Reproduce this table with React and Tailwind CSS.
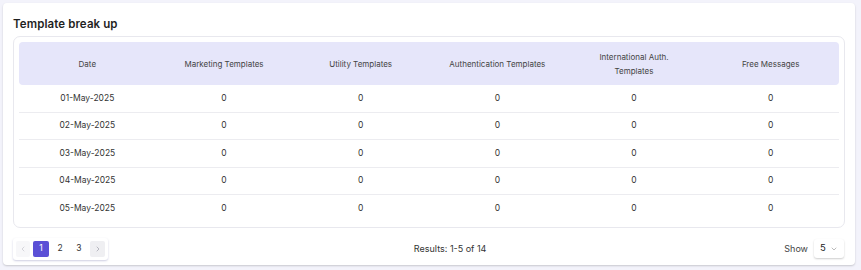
import React from "react";
import { FiChevronLeft, FiChevronRight, FiChevronDown } from "react-icons/fi";

const columns = [
  "Date",
  "Marketing Templates",
  "Utility Templates",
  "Authentication Templates",
  "International Auth.|Templates",
  "Free Messages",
];

const rows = ["01-May-2025", "02-May-2025", "03-May-2025", "04-May-2025", "05-May-2025"];

export default function App() {
  return (
    <div
      className="w-[861px] h-[270px] bg-[#f3f3fb] pt-[3px] pl-[3px] overflow-hidden"
      style={{ fontFamily: "Inter, 'Noto Sans', sans-serif" }}
    >
      <div className="w-[852px] h-[262px] bg-white rounded-[4px] shadow-[0_1px_2px_rgba(0,0,0,0.18)] px-[10px] pt-[14px]">
        <h2 className="text-[11.5px] font-semibold text-[#1f1f1f] leading-[15px] tracking-[0.1px]">
          Template break up
        </h2>

        {/* table */}
        <div className="mt-[4px] border border-[#e8e8ee] rounded-[7px] px-[5px] pt-[5px] pb-[4px]">
          <div className="grid grid-cols-6 h-[43px] bg-[#e6e6fa] rounded-[4px] items-center text-center text-[8px] text-[#444] leading-[14px]">
            {columns.map((c) => (
              <div key={c}>
                {c.split("|").map((part, i) => (
                  <div key={i}>{part}</div>
                ))}
              </div>
            ))}
          </div>
          {rows.map((d, i) => (
            <div
              key={d}
              className={`grid grid-cols-6 h-[27.5px] items-center text-center text-[8.5px] text-[#333] ${
                i < rows.length - 1 ? "border-b border-[#ececf0]" : ""
              }`}
            >
              <div>{d}</div>
              <div>0</div>
              <div>0</div>
              <div>0</div>
              <div>0</div>
              <div>0</div>
            </div>
          ))}
        </div>

        {/* footer */}
        <div className="flex items-center justify-between mt-[10px]">
          <div className="flex items-center gap-[3px] p-[3px] rounded-[3px] shadow-[0_1px_2px_rgba(60,60,140,0.25)] bg-white">
            <button className="w-[14px] h-[16px] rounded-[2px] bg-[#f7f7f9] flex items-center justify-center text-[#c4c4cc]">
              <FiChevronLeft size={8} />
            </button>
            <button className="w-[16px] h-[16px] rounded-[2px] bg-[#5b50d6] text-white text-[8.5px] flex items-center justify-center">
              1
            </button>
            <button className="w-[16px] h-[16px] text-[8.5px] text-[#333] flex items-center justify-center">
              2
            </button>
            <button className="w-[16px] h-[16px] text-[8.5px] text-[#333] flex items-center justify-center">
              3
            </button>
            <button className="w-[15px] h-[16px] rounded-[2px] bg-[#efeff2] flex items-center justify-center text-[#9a9aa6]">
              <FiChevronRight size={8} />
            </button>
          </div>
          <div className="text-[9px] text-[#333] pl-[8px]">Results: 1-5 of 14</div>
          <div className="flex items-center gap-[6px] pr-[1px]">
            <span className="text-[9px] text-[#444]">Show</span>
            <div className="w-[30px] h-[19px] rounded-[3px] shadow-[0_1px_2px_rgba(0,0,0,0.2)] bg-white flex items-center justify-between px-[6px] text-[9.5px] text-[#222]">
              <span>5</span>
              <FiChevronDown size={8} className="text-[#999]" />
            </div>
          </div>
        </div>
      </div>
    </div>
  );
}
